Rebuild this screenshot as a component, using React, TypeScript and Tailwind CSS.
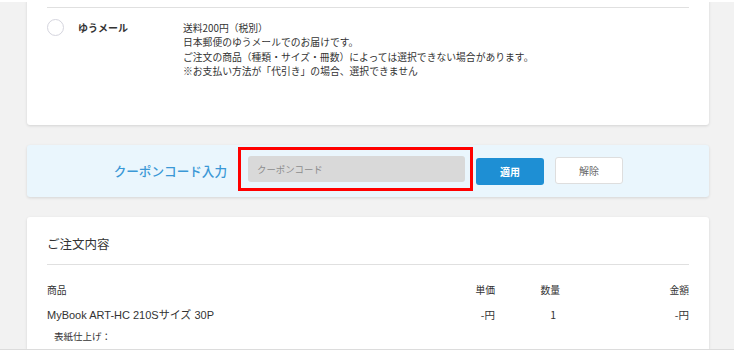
import React from "react";

const font = { fontFamily: '"Noto Sans CJK JP", "Noto Sans", sans-serif' };
const latin = { fontFamily: '"Liberation Sans", "Noto Sans CJK JP", sans-serif' };

export default function App() {
  return (
    <div
      className="w-[734px] h-[350px] overflow-hidden bg-[#f2f2f2] text-[#333] flex flex-col pl-[27px] pr-[25px] border-b border-[#dcdcdc] relative"
      style={font}
    >
      <div className="absolute left-0 top-0 w-[35px] h-[2px] bg-white" />
      <div className="absolute right-0 top-0 w-[36px] h-[2px] bg-white" />
      {/* Shipping option card */}
      <div className="h-[125px] shrink-0 bg-white rounded-b-[3px] shadow-[0_1px_3px_rgba(0,0,0,0.13)] px-[20px] pt-[7px]">
        <div className="border-t border-[#e0e0e0] flex items-start pt-[11px]">
          <div className="w-[17px] h-[17px] rounded-full border border-[#d5d5de] bg-white shrink-0" />
          <div className="ml-[14px] w-[105px] mt-[2px] text-[10px] leading-[14px] font-bold text-[#333]">
            ゆうメール
          </div>
          <div className="mt-[2px] text-[9.8px] leading-[14.3px] text-[#333]">
            <div>送料200円（税別）</div>
            <div>日本郵便のゆうメールでのお届けです。</div>
            <div>ご注文の商品（種類・サイズ・冊数）によっては選択できない場合があります。</div>
            <div>※お支払い方法が「代引き」の場合、選択できません</div>
          </div>
        </div>
      </div>

      {/* Coupon card */}
      <div className="mt-[20px] h-[52px] shrink-0 bg-[#eaf6fd] rounded-[3px] shadow-[0_1px_3px_rgba(0,0,0,0.12)] flex items-center">
        <div className="w-[200px] text-right text-[12.6px] font-medium text-[#3b98d6] leading-none">
          クーポンコード入力
        </div>
        <div className="ml-[11px] w-[235px] h-[44px] border-[3px] border-[#ff0000] flex items-center pl-[7px] pr-[5px] -mt-[4px]">
          <div className="w-full h-[26px] bg-[#d9d9d9] rounded-[3px] flex items-center pl-[9px] text-[9.4px] text-[#8c8c8c]">
            クーポンコード
          </div>
        </div>
        <button className="ml-[3px] w-[68px] h-[27px] rounded-[3px] bg-[#1e8fd4] text-white text-[10px] font-bold flex items-center justify-center">
          適用
        </button>
        <button className="ml-[11px] w-[68px] h-[27px] -mt-[2px] rounded-[3px] bg-white border border-[#dedede] text-[#666] text-[10px] flex items-center justify-center">
          解除
        </button>
      </div>

      {/* Order card */}
      <div className="mt-[20px] flex-1 shrink-0 bg-white rounded-t-[3px] shadow-[0_1px_3px_rgba(0,0,0,0.13)] px-[20px] pt-[18px]">
        <div className="text-[12.5px] leading-[18px] pb-[11px] border-b border-[#e0e0e0]">ご注文内容</div>
        <div className="mt-[17px] flex text-[9.8px] leading-[16px]">
          <div className="flex-1">商品</div>
          <div className="w-[60px] text-right">単価</div>
          <div className="w-[65px] text-right">数量</div>
          <div className="w-[129px] text-right">金額</div>
        </div>
        <div className="mt-[9px] flex text-[10.5px] leading-[16px]">
          <div className="flex-1 text-[11px]" style={latin}>MyBook ART-HC 210Sサイズ 30P</div>
          <div className="w-[60px] text-right">-円</div>
          <div className="w-[61px] text-right">1</div>
          <div className="w-[133px] text-right">-円</div>
        </div>
        <div className="mt-[5px] pl-[7px] text-[9.5px] leading-[16px]">表紙仕上げ：</div>
      </div>
    </div>
  );
}
